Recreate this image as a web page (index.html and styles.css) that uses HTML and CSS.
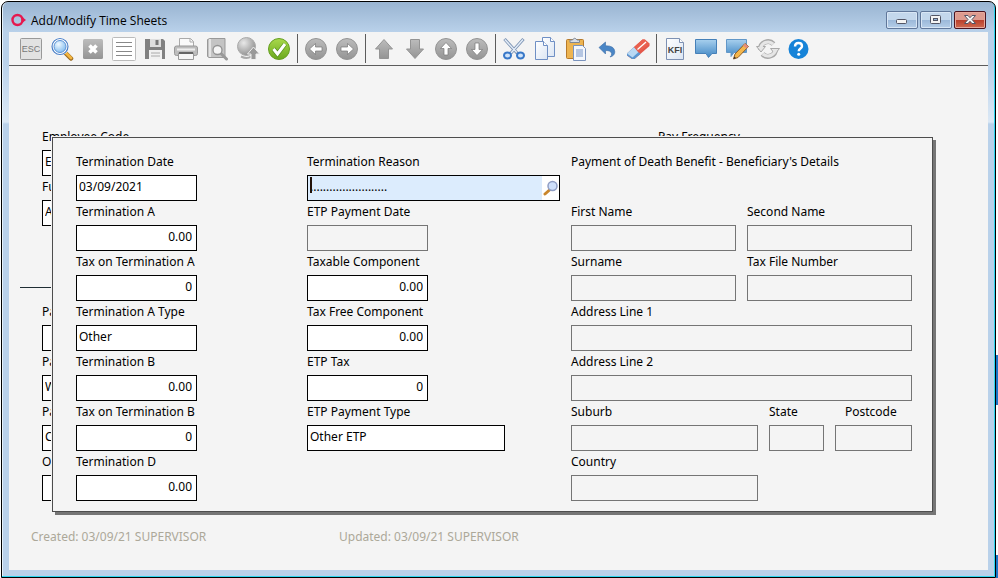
FILE: index.html
```html
<!DOCTYPE html>
<html lang="en">
<head>
  <meta charset="UTF-8">
  <meta name="viewport" content="width=device-width, initial-scale=1.0">
  <title>Add/Modify Time Sheets</title>
  <link rel="stylesheet" href="styles.css">
</head>
<body>
  <!-- Shared icon gradients -->
  <svg class="defs" width="0" height="0" aria-hidden="true">
    <defs>
      <linearGradient id="grey" x1="0" y1="0" x2="0" y2="1"><stop offset="0" stop-color="#bcbcbc"/><stop offset="1" stop-color="#949494"/></linearGradient>
      <linearGradient id="blue" x1="0" y1="0" x2="0" y2="1"><stop offset="0" stop-color="#a8d0ee"/><stop offset="1" stop-color="#3f86c4"/></linearGradient>
      <linearGradient id="green" x1="0" y1="0" x2="0" y2="1"><stop offset="0" stop-color="#a9d94c"/><stop offset="1" stop-color="#6aa81c"/></linearGradient>
      <linearGradient id="paper" x1="0" y1="0" x2="1" y2="1"><stop offset="0" stop-color="#ffffff"/><stop offset="1" stop-color="#dbe5f3"/></linearGradient>
      <radialGradient id="lens" cx="0.4" cy="0.35" r="0.7"><stop offset="0" stop-color="#f0f9ff"/><stop offset="1" stop-color="#6db0ec"/></radialGradient>
      <radialGradient id="ball" cx="0.35" cy="0.3" r="0.8"><stop offset="0" stop-color="#e8e8e8"/><stop offset="1" stop-color="#888888"/></radialGradient>
    </defs>
  </svg>

  <div class="window">
    <header class="title-bar">
      <svg class="logo" viewBox="0 0 16 14"><circle cx="6.5" cy="7" r="5" fill="none" stroke="#e5194f" stroke-width="2.4"/><path d="M10.5 3.5L15 7l-4.500 3.500z" fill="#e5194f"/></svg>
      <h1>Add/Modify Time Sheets</h1>
      <div class="window-buttons">
        <button class="win-btn" aria-label="Minimize"><svg viewBox="0 0 14 12"><rect x="1.500" y="5.500" width="10" height="4" rx="1" fill="#f4f4f4" stroke="#535666"/></svg></button>
        <button class="win-btn" aria-label="Maximize"><svg viewBox="0 0 14 12"><rect x="1.500" y="1.500" width="10" height="8" rx="1" fill="#f4f4f4" stroke="#535666"/><rect x="4.500" y="4.500" width="4" height="2" fill="#8fb0d4" stroke="#535666"/></svg></button>
        <button class="win-btn close" aria-label="Close"><svg viewBox="0 0 14 12"><path d="M1.500 1.500h3.500l2 2.200 2-2.200h3.500L9 5.500l3.500 4H9L7 7.300 5 9.500H1.500L5 5.500z" fill="#f4f4f4" stroke="#535666"/></svg></button>
      </div>
    </header>

    <main class="client">
      <nav class="toolbar">
        <button aria-label="Escape"><svg viewBox="0 0 24 24"><rect x="1.500" y="1.500" width="21" height="21" rx="1" fill="#e2e2e2" stroke="#999"/><text class="esc" x="12" y="15">ESC</text></svg></button>
        <button aria-label="Search"><svg viewBox="0 0 24 24"><path d="M15.500 16l5.500 5.500" stroke="#9a6a22" stroke-width="4.500" stroke-linecap="round"/><path d="M16 16l5 5" stroke="#f3b53f" stroke-width="2.800" stroke-linecap="round"/><circle cx="10" cy="9.500" r="7.500" fill="url(#lens)" stroke="#fff" stroke-width="3"/><circle cx="10" cy="9.500" r="8" fill="none" stroke="#4b7fc6" stroke-width="1.200"/><circle cx="10" cy="9.500" r="6" fill="none" stroke="#5b92d6"/></svg></button>
        <button aria-label="Cancel"><svg viewBox="0 0 24 24"><rect x="2" y="2" width="20" height="20" rx="1.500" fill="url(#grey)"/><path d="M8.500 8.500l7 7M15.500 8.500l-7 7" stroke="#fff" stroke-width="3.600"/></svg></button>
        <button aria-label="List"><svg viewBox="0 0 24 24"><rect x=".5" y=".5" width="23" height="23" rx="1" fill="#fff" stroke="#bbb"/><path d="M4 5.500h16M4 9.500h16M4 14.500h16M4 18.500h16" stroke="#888" stroke-width="1.200"/></svg></button>
        <button aria-label="Save"><svg viewBox="0 0 24 24"><path d="M2 2h18l2 2v18H2z" fill="#818181"/><path d="M7 2h11v8H7z" fill="#dedede"/><path d="M12.500 3h3v5h-3z" fill="#777"/><path d="M6 13h13v9H6z" fill="#f1f1f1"/><path d="M8 16h9M8 19h9" stroke="#aaa"/></svg></button>
        <button aria-label="Print"><svg viewBox="0 0 24 24"><path d="M5.500 10V1.500h11l3 3V10" fill="#fafafa" stroke="#aaa"/><path d="M16 1.500V5h3.500" fill="none" stroke="#aaa"/><rect x=".5" y="9" width="23" height="9.500" rx="2" fill="#bdbdbd" stroke="#999"/><path d="M3 12.500h18" stroke="#eee" stroke-width="2"/><path d="M4.500 16h15v6.500h-15z" fill="#f6f6f6" stroke="#999"/><path d="M5 16h14" stroke="#666" stroke-width="2"/></svg></button>
        <button aria-label="Preview"><svg viewBox="0 0 24 24"><path d="M2.500 2.500L5 1.500h15v19H4l-1.500-1z" fill="#c4c4c4" stroke="#999"/><path d="M5 2v18" stroke="#e4e4e4" stroke-width="2"/><path d="M15.500 16l6 6" stroke="#999" stroke-width="3" stroke-linecap="round"/><circle cx="12.500" cy="13" r="4.500" fill="#f4f4f4" stroke="#929292" stroke-width="1.300"/></svg></button>
        <button aria-label="Upload"><svg viewBox="0 0 24 24"><circle cx="10.500" cy="9.500" r="9" fill="url(#ball)" stroke="#aaa"/><path d="M5 19.500q6 3 10 0" fill="none" stroke="#aaa" stroke-width="2"/><path d="M17.500 10l6 7h-3.500v5.500h-5V17h-3.500z" fill="#999" stroke="#eee"/></svg></button>
        <button aria-label="Accept"><svg viewBox="0 0 24 24"><circle cx="12" cy="12" r="10.500" fill="url(#green)" stroke="#659f20"/><path d="M6.500 12l4 5 7.500-10" fill="none" stroke="#55911d" stroke-width="4.500"/><path d="M6.500 12l4 5 7.500-10" fill="none" stroke="#fff" stroke-width="3"/></svg></button>
        <span class="sep"></span>
        <button aria-label="Previous"><svg viewBox="0 0 24 24"><circle cx="12" cy="12" r="10.500" fill="url(#grey)" stroke="#949494"/><path d="M5.500 12l6-5.500v3.500h6.500v4h-6.500v3.500z" fill="#fff" stroke="#777" stroke-width=".7"/></svg></button>
        <button aria-label="Next"><svg viewBox="0 0 24 24"><circle cx="12" cy="12" r="10.500" fill="url(#grey)" stroke="#949494"/><path d="M18.500 12l-6-5.500v3.500H6v4h6.500v3.500z" fill="#fff" stroke="#777" stroke-width=".7"/></svg></button>
        <span class="sep"></span>
        <button aria-label="Up"><svg viewBox="0 0 24 24"><path d="M12 2.500l8.500 9.500H16.500v9.500h-9V12H3.500z" fill="url(#grey)" stroke="#949494"/></svg></button>
        <button aria-label="Down"><svg viewBox="0 0 24 24"><path d="M12 21.500L20.500 12H16.500V2.500h-9V12H3.500z" fill="url(#grey)" stroke="#949494"/></svg></button>
        <button aria-label="First"><svg viewBox="0 0 24 24"><circle cx="12" cy="12" r="10.500" fill="url(#grey)" stroke="#949494"/><path d="M12 5.500l5.500 6H14V18h-4v-6.500H6.500z" fill="#fff" stroke="#777" stroke-width=".7"/></svg></button>
        <button aria-label="Last"><svg viewBox="0 0 24 24"><circle cx="12" cy="12" r="10.500" fill="url(#grey)" stroke="#949494"/><path d="M12 18.500l5.500-6H14V6h-4v6.500H6.500z" fill="#fff" stroke="#777" stroke-width=".7"/></svg></button>
        <span class="sep"></span>
        <button aria-label="Cut"><svg viewBox="0 0 24 24"><path d="M2.500 2l13 14.500M21.500 2L8.500 16.500" stroke="#7d94b4" stroke-width="3.200"/><path d="M2.800 2.500l12 13M21 2.500L9 16" stroke="#e4edf8" stroke-width="1.400"/><ellipse cx="5.500" cy="18.500" rx="3.500" ry="3" fill="#cfe3fa" stroke="#3878c8" stroke-width="2"/><ellipse cx="18.500" cy="18.500" rx="3.500" ry="3" fill="#cfe3fa" stroke="#3878c8" stroke-width="2"/></svg></button>
        <button aria-label="Copy"><svg viewBox="0 0 24 24"><path d="M9.500.5h8l4 4v15h-12z" fill="url(#paper)" stroke="#6f8fc4"/><path d="M2.500 4.500h8l4 4v14h-12z" fill="url(#paper)" stroke="#6f8fc4"/><path d="M10.500 4.500v4h4M17.500.5v4h4" fill="#fff" stroke="#6f8fc4"/></svg></button>
        <button aria-label="Paste"><svg viewBox="0 0 24 24"><rect x="2.500" y="2.500" width="17" height="19" rx="1" fill="#edb451" stroke="#b77a2a"/><path d="M6 5.500V3h2.500q2-3.500 4.500 0h2.500v2.500z" fill="#d8dde5" stroke="#808894"/><path d="M9.500 8.500h9l3 3v12h-12z" fill="#f4f7fc" stroke="#7a93bd"/><path d="M12 12h7v8h-7z" fill="#b5c6e2"/></svg></button>
        <button aria-label="Undo"><svg viewBox="0 0 24 24"><path d="M4 10.500L10.500 5v3.800q9-.3 9.300 6 0 4-4.800 5.200 2-1.500 1.600-3.600-.7-3-6.100-2.900V17z" fill="#4a86c6" stroke="#3a6ba5" stroke-width=".6"/></svg></button>
        <button aria-label="Erase"><svg viewBox="0 0 24 24"><path d="M1 16.500L16.500 2.500h2.500l4.500 4v2.500L8.500 22H6l-5-3.500z" fill="#e4574a"/><path d="M1 16.500L8 10l6.500 7L8.500 22H6l-5-3.500z" fill="#5b97d2"/><path d="M1 16.500L8 10l4.500 5L6.500 20.500z" fill="#b9d8f3"/><path d="M8 10l8.500-7.500h2L23.500 7 12.500 15.500z" fill="#e9604f"/><path d="M11.500 12.500L20 5" stroke="#fff" stroke-width="1.300"/></svg></button>
        <span class="sep"></span>
        <button aria-label="KFI"><svg viewBox="0 0 24 24"><path d="M3.500 1.500h13l4 4v17h-17z" fill="url(#paper)" stroke="#7e91b3"/><path d="M16.500 1.500v4h4" fill="#fff" stroke="#7e91b3"/><text class="kfi" x="12" y="16">KFI</text></svg></button>
        <button aria-label="Message"><svg viewBox="0 0 24 24"><path d="M1.500 2.500h21v14H18L14.500 20.500 12 16.500H1.500z" fill="url(#blue)" stroke="#4680b8"/></svg></button>
        <button aria-label="Edit message"><svg viewBox="0 0 24 24"><path d="M1.500 2.500h20v13H9L6 19.500V15.500H1.500z" fill="url(#blue)" stroke="#6297c8"/><path d="M8.500 22l1.500-5L20 6.500l3.500 3L13 20.500z" fill="#f3b64c" stroke="#8e5d28"/><path d="M18 8.500l3.500 3 2-2L20 6.500z" fill="#e28c7c"/><path d="M8.500 22l.8-2.500 1.700 1.600z" fill="#333"/></svg></button>
        <button aria-label="Refresh"><svg viewBox="0 0 24 24"><path d="M4.500 12.500A7.500 7.500 0 0 1 17.500 7M19.500 11.500A7.500 7.500 0 0 1 6.500 17" fill="none" stroke="#a8a8a8" stroke-width="5"/><path d="M.5 11.500h9L5 6z" fill="#e6e6e6" stroke="#a8a8a8" transform="rotate(180 5 10.500)"/><path d="M14.500 11.500h9L19 17z" fill="#e6e6e6" stroke="#a8a8a8"/><path d="M4.500 12A7.500 7.500 0 0 1 17.200 7.200M19.500 12A7.500 7.500 0 0 1 6.800 16.800" fill="none" stroke="#e6e6e6" stroke-width="3.200"/></svg></button>
        <button aria-label="Help"><svg viewBox="0 0 24 24"><circle cx="11.500" cy="12" r="10" fill="#1683d8"/><path d="M8 9.500q0-3.500 3.500-3.500t3.500 3.200c0 2.300-3.300 2.400-3.300 5" fill="none" stroke="#fff" stroke-width="2.400"/><circle cx="11.700" cy="17.300" r="1.500" fill="#fff"/></svg></button>
      </nav>

      <div class="workspace">
        <!-- Time sheet form, mostly covered by the dialog -->
        <form class="sheet">
          <div class="sheet-top">
            <div class="field"><label for="empCode">Employee Code</label><input id="empCode" value="E"></div>
            <div class="field"><label for="payFreq">Pay Frequency</label><input id="payFreq"></div>
          </div>
          <div class="field"><label for="fullName">Fu</label><input id="fullName" value="A"></div>
          <hr>
          <div class="field"><label for="pay1">Pa</label><input id="pay1"></div>
          <div class="field"><label for="pay2">Pa</label><input id="pay2" value="W"></div>
          <div class="field"><label for="pay3">Pa</label><input id="pay3" value="C"></div>
          <div class="field"><label for="other">O</label><input id="other"></div>
        </form>
        <footer class="audit">
          <span>Created: 03/09/21 SUPERVISOR</span>
          <span>Updated: 03/09/21 SUPERVISOR</span>
        </footer>

        <!-- Termination dialog -->
        <form class="dialog" role="dialog" aria-label="Termination">
          <div class="column narrow">
            <div class="field"><label for="termDate">Termination Date</label><input id="termDate" value="03/09/2021"></div>
            <div class="field"><label for="termA">Termination A</label><input id="termA" class="num" value="0.00"></div>
            <div class="field"><label for="taxA">Tax on Termination A</label><input id="taxA" class="num" value="0"></div>
            <div class="field"><label for="typeA">Termination A Type</label><input id="typeA" value="Other"></div>
            <div class="field"><label for="termB">Termination B</label><input id="termB" class="num" value="0.00"></div>
            <div class="field"><label for="taxB">Tax on Termination B</label><input id="taxB" class="num" value="0"></div>
            <div class="field"><label for="termD">Termination D</label><input id="termD" class="num" value="0.00"></div>
          </div>

          <div class="column narrow">
            <div class="field wide">
              <label for="reason">Termination Reason</label>
              <div class="lookup">
                <span class="caret"></span>
                <input id="reason" value="........................">
                <button type="button" aria-label="Find reason"><svg viewBox="0 0 16 16"><path d="M2 14l4.500-4" stroke="#c9862c" stroke-width="3" stroke-linecap="round"/><circle cx="9.500" cy="6" r="4.500" fill="#cfe0fb" stroke="#8f9dc4" stroke-width="1.500"/></svg></button>
              </div>
            </div>
            <div class="field"><label for="etpDate">ETP Payment Date</label><input id="etpDate" disabled></div>
            <div class="field"><label for="taxable">Taxable Component</label><input id="taxable" class="num" value="0.00"></div>
            <div class="field"><label for="taxFree">Tax Free Component</label><input id="taxFree" class="num" value="0.00"></div>
            <div class="field"><label for="etpTax">ETP Tax</label><input id="etpTax" class="num" value="0"></div>
            <div class="field medium"><label for="etpType">ETP Payment Type</label><input id="etpType" value="Other ETP"></div>
          </div>

          <fieldset class="column">
            <legend>Payment of Death Benefit - Beneficiary's Details</legend>
            <div class="pair">
              <div class="field"><label for="first">First Name</label><input id="first" disabled></div>
              <div class="field"><label for="second">Second Name</label><input id="second" disabled></div>
              <div class="field"><label for="surname">Surname</label><input id="surname" disabled></div>
              <div class="field"><label for="tfn">Tax File Number</label><input id="tfn" disabled></div>
            </div>
            <div class="field"><label for="addr1">Address Line 1</label><input id="addr1" disabled></div>
            <div class="field"><label for="addr2">Address Line 2</label><input id="addr2" disabled></div>
            <div class="place">
              <div class="field"><label for="suburb">Suburb</label><input id="suburb" disabled></div>
              <div class="field"><label for="state">State</label><input id="state" disabled></div>
              <div class="field postcode"><label for="postcode">Postcode</label><input id="postcode" disabled></div>
              <div class="field"><label for="country">Country</label><input id="country" disabled></div>
            </div>
          </fieldset>
        </form>
      </div>
    </main>
  </div>
</body>
</html>
```
FILE: styles.css
```css
* {
  box-sizing: border-box;
}

body {
  margin: 0;
  padding: 1px 2px 0 1px;
  min-height: 100vh;
  display: flex;
  font-family: "Noto Sans", Tahoma, sans-serif;
  font-size: 12px;
  color: #000;
  background: linear-gradient(#fff 355px, #1a73c8 355px, #1a73c8 405px, #fff 405px, #fff 555px, #1a73c8 555px) right / 2px 100% no-repeat #fff;
}

button {
  padding: 0;
  border: none;
  background: none;
}

.defs {
  position: absolute;
}

/* Window frame */
.window {
  flex: 1;
  display: flex;
  flex-direction: column;
  padding: 0 7px 7px;
  border: 1px solid #000;
  border-radius: 7px 7px 0 0;
  background: linear-gradient(#99b4d1, #b9d1ea 30px, #b9d1ea 60px, #dbe8f5 120px, #b9d1ea 122px);
  box-shadow: inset -1px -1px #2cd5ef, inset 1px 0 #e6f2fb;
}

.title-bar {
  display: flex;
  align-items: center;
  height: 30px;
  padding: 6px 2px 0;
}

.logo {
  width: 16px;
  height: 14px;
  margin-right: 4px;
}

.title-bar h1 {
  flex: 1;
  margin: 0;
  font-family: "Open Sans", "Segoe UI", sans-serif;
  font-size: 12px;
  font-weight: normal;
}

.window-buttons {
  display: flex;
  gap: 2px;
}

.win-btn {
  display: flex;
  align-items: center;
  justify-content: center;
  width: 32px;
  height: 18px;
  border: 1px solid #60779a;
  border-radius: 2px;
  background: linear-gradient(#c3d7ec 50%, #9bb8d9 50%, #b5cee8);
  box-shadow: inset 0 0 0 1px #d8e6f5;
}

.win-btn svg {
  width: 14px;
  height: 12px;
}

.win-btn.close {
  border-color: #4c1420;
  background: linear-gradient(#dd9b8f 50%, #b93e2a 50%, #cf6a50);
  box-shadow: inset 0 0 0 1px #e6a99d;
}

.client {
  flex: 1;
  display: flex;
  flex-direction: column;
  background: #f4f4f4;
}

/* Toolbar */
.toolbar {
  display: flex;
  align-items: center;
  height: 34px;
  padding-left: 6px;
  border-bottom: 1px solid #5c5c5c;
}

.toolbar button {
  display: flex;
  justify-content: center;
  width: 31px;
}

.toolbar svg {
  width: 24px;
  height: 24px;
}

.sep {
  width: 1px;
  height: 29px;
  margin: 0 2px 0 3px;
  background: #5c5c5c;
}

.esc,
.kfi {
  font-family: "Liberation Sans", Arial, sans-serif;
  font-size: 9px;
  text-anchor: middle;
  fill: #777;
}

.kfi {
  font-weight: bold;
  fill: #444;
}

/* Fields */
.workspace {
  position: relative;
  flex: 1;
}

.field {
  display: flex;
  flex-direction: column;
}

label,
legend {
  height: 24px;
  line-height: 22px;
  white-space: nowrap;
}

input {
  width: 100%;
  height: 26px;
  padding: 0 4px 3px 2px;
  border: 1px solid #000;
  border-radius: 0;
  background: #fff;
  color: #000;
  font: inherit;
  outline: none;
}

input:disabled {
  border-color: #757575;
  background: #f4f4f4;
}

.num {
  text-align: right;
}

/* Time sheet behind the dialog */
.sheet {
  padding: 60px 55px 0 11px;
}

.sheet .field {
  width: 120px;
  margin-left: 22px;
}

.sheet-top {
  display: flex;
  gap: 474px;
}

.sheet hr {
  height: 1px;
  margin: 61px 0 13px;
  border: none;
  background: #1f2d33;
}

.audit {
  display: flex;
  padding: 26px 22px 22px;
  line-height: 20px;
  color: #aca899;
}

.audit span {
  flex: 0 0 308px;
}

/* Termination dialog */
.dialog {
  position: absolute;
  top: 71px;
  left: 43px;
  right: 55px;
  display: grid;
  grid-template-columns: 231px 264px 1fr;
  padding: 13px 20px 10px 23px;
  border: 1px solid #4d4d4d;
  background: #f4f4f4;
  box-shadow: 3px 3px #757575, 0 0 0 1px #f4f4f4;
}

.narrow .field {
  width: 121px;
}

.narrow .wide {
  width: 253px;
}

.narrow .medium {
  width: 198px;
}

.lookup {
  position: relative;
  display: flex;
  height: 26px;
  border: 1px solid #000;
  background: #fff;
}

.lookup input {
  flex: 1;
  height: 24px;
  border: none;
  background: #dcecfd;
}

.lookup button {
  display: flex;
  align-items: center;
  justify-content: center;
  width: 17px;
}

.lookup svg {
  width: 16px;
  height: 16px;
}

.caret {
  position: absolute;
  top: 1px;
  left: 2px;
  width: 2px;
  height: 16px;
  background: #23130a;
}

fieldset {
  min-width: 0;
  margin: 0;
  padding: 0;
  border: none;
}

legend {
  padding: 0;
  margin-bottom: 26px;
}

.pair {
  display: grid;
  grid-template-columns: 1fr 1fr;
  column-gap: 11px;
}

.place {
  display: grid;
  grid-template-columns: 187px 55px 1fr;
  column-gap: 11px;
}

.postcode label {
  padding-left: 10px;
}
```
